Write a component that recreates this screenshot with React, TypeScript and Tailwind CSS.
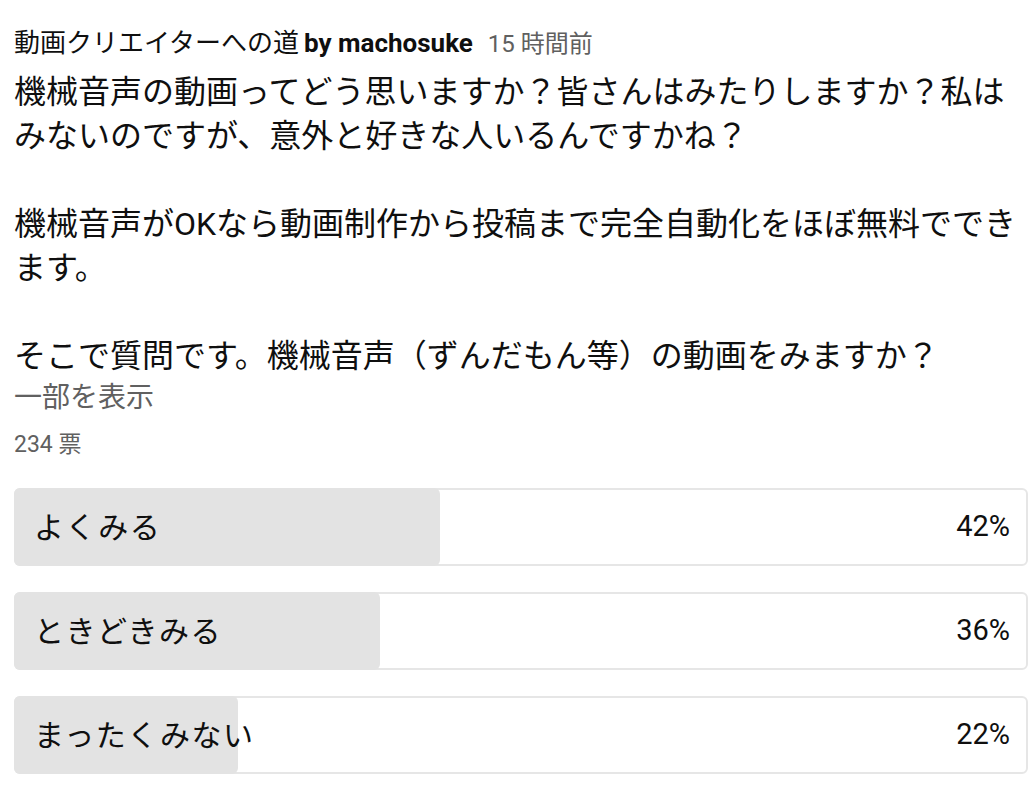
// Community-post poll card: header, post text, vote count and result bars.

const FONT = { fontFamily: 'Roboto, "Noto Sans CJK JP", "Noto Sans", sans-serif' }

interface PollOption {
  label: string
  percent: number
}

const options: PollOption[] = [
  { label: 'よくみる', percent: 42 },
  { label: 'ときどきみる', percent: 36 },
  { label: 'まったくみない', percent: 22 },
]

const bodyLines = [
  '機械音声の動画ってどう思いますか？皆さんはみたりしますか？私は',
  'みないのですが、意外と好きな人いるんですかね？',
  '',
  '機械音声がOKなら動画制作から投稿まで完全自動化をほぼ無料ででき',
  'ます。',
  '',
  'そこで質問です。機械音声（ずんだもん等）の動画をみますか？',
]

function PollBar({ label, percent }: PollOption) {
  return (
    <div className="relative h-[78px] rounded-md border-2 border-[#e6e6e6] bg-white">
      <div
        className="absolute top-[-2px] bottom-[-2px] left-[-2px] rounded-md bg-[#e3e3e3]"
        style={{ width: `calc(${percent}% + 2px)` }}
      />
      <div className="relative flex h-full items-center justify-between pl-[18px] pr-[16px]">
        <span className="text-[30px] tracking-[1.5px] text-[#0f0f0f]">{label}</span>
        <span className="text-[29px] text-[#0f0f0f]">{percent}%</span>
      </div>
    </div>
  )
}

export default function App() {
  return (
    <div className="min-h-screen w-[1036px] bg-white pl-[14px] pr-[8px] pt-[26px]" style={FONT}>
      <div className="flex items-baseline whitespace-nowrap text-[26px] leading-[34px] text-[#0f0f0f]">
        <span>動画クリエイターへの道</span>
        <span className="ml-[5px] font-bold">by machosuke</span>
        <span className="ml-[15px] text-[24px] text-[#606060]">15 時間前</span>
      </div>

      <div className="mt-[9px] whitespace-nowrap text-[32px] leading-[44px] text-[#0f0f0f]">
        {bodyLines.map((line, i) => (
          <div key={i} className="h-[44px]">{line}</div>
        ))}
      </div>

      <div className="mt-[2px] text-[28px] leading-[36px] text-[#606060]">一部を表示</div>
      <div className="mt-[14px] text-[23px] leading-[30px] text-[#606060]">234 票</div>

      <div className="mt-[28px] flex flex-col gap-[26px]">
        {options.map(o => (
          <PollBar key={o.label} {...o} />
        ))}
      </div>
    </div>
  )
}
